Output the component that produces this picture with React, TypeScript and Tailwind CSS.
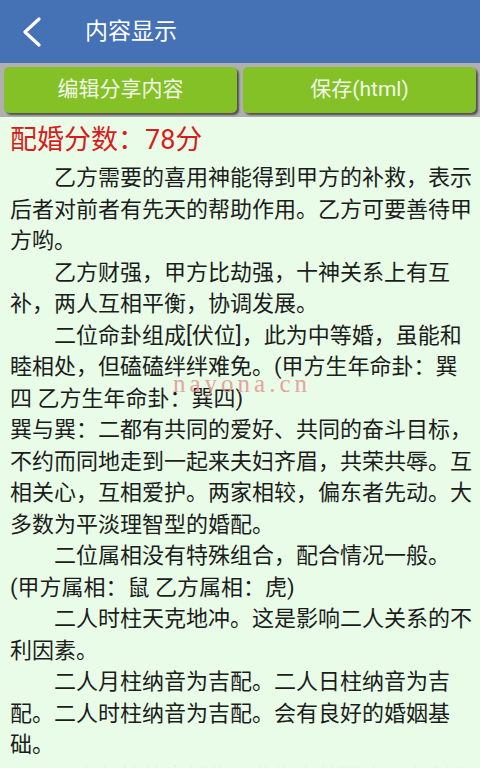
import React from "react";

const paragraphs: { text: string; indent: boolean }[] = [
  { text: "乙方需要的喜用神能得到甲方的补救，表示后者对前者有先天的帮助作用。乙方可要善待甲方哟。", indent: true },
  { text: "乙方财强，甲方比劫强，十神关系上有互补，两人互相平衡，协调发展。", indent: true },
  { text: "二位命卦组成[伏位]，此为中等婚，虽能和睦相处，但磕磕绊绊难免。(甲方生年命卦：巽四 乙方生年命卦：巽四)", indent: true },
  { text: "巽与巽：二都有共同的爱好、共同的奋斗目标，不约而同地走到一起来夫妇齐眉，共荣共辱。互相关心，互相爱护。两家相较，偏东者先动。大多数为平淡理智型的婚配。", indent: false },
  { text: "二位属相没有特殊组合，配合情况一般。(甲方属相：鼠 乙方属相：虎)", indent: true },
  { text: "二人时柱天克地冲。这是影响二人关系的不利因素。", indent: true },
  { text: "二人月柱纳音为吉配。二人日柱纳音为吉配。二人时柱纳音为吉配。会有良好的婚姻基础。", indent: true },
  { text: "二人年柱纳音相生，此为上等配合，有利于婚后生活。", indent: true },
];

export default function App() {
  return (
    <div
      className="w-[480px] h-[768px] overflow-hidden flex flex-col bg-[#e8fce8]"
      style={{ fontFamily: 'Roboto, "Noto Sans CJK SC", sans-serif' }}
    >
      {/* Header */}
      <div className="h-[63px] shrink-0 bg-[#4571b5] flex items-center">
        <div className="w-[64px] h-full flex items-center justify-center">
          <svg width="20" height="30" viewBox="0 0 20 30" fill="none" className="ml-[-1px]">
            <path d="M17 2 L3 15 L17 28" stroke="#ffffff" strokeWidth="3.2" strokeLinecap="round" strokeLinejoin="round" />
          </svg>
        </div>
        <span className="ml-[21px] text-white text-[23px] leading-none">内容显示</span>
      </div>

      {/* Buttons */}
      <div className="shrink-0 bg-[#afafaf] px-[4px] pt-[4px] pb-[4px] flex gap-[6px]">
        <div className="flex-1 h-[46px] rounded-[5px] bg-[#84c126] shadow-[2px_2px_2px_rgba(0,0,0,0.55)] flex items-center justify-center text-[#f2f7e8] text-[21px]">
          编辑分享内容
        </div>
        <div className="flex-1 h-[46px] rounded-[5px] bg-[#84c126] shadow-[2px_2px_2px_rgba(0,0,0,0.55)] flex items-center justify-center text-[#f2f7e8] text-[21px]">
          保存(html)
        </div>
      </div>

      {/* Content */}
      <div className="relative flex-1 overflow-hidden pl-[10px] pr-[4px] pt-[4px]">
        <div className="text-[#d81c1c] text-[27px] leading-[38px]">配婚分数：78分</div>
        <div className="mt-[3px] text-[#1c1c1c] text-[22px] leading-[31.5px]">
          {paragraphs.map((p, i) => (
            <p key={i} className={p.indent ? "indent-[44px]" : ""}>
              {p.text}
            </p>
          ))}
        </div>

        {/* watermark */}
        <div
          className="absolute left-[173px] top-[254px] text-[25px] leading-none tracking-[4px] text-[#e79a9a] opacity-90"
          style={{ fontFamily: '"Liberation Serif", serif' }}
        >
          nayona.cn
        </div>

        {/* bottom fade */}
        <div className="absolute left-0 right-0 bottom-0 h-[14px] bg-gradient-to-b from-[#e8fce8]/70 to-[#e8fce8]" />
      </div>
    </div>
  );
}
